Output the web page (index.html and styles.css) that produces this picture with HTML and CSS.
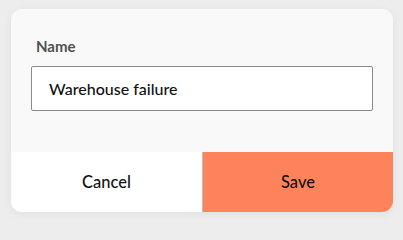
FILE: index.html
```html
<!DOCTYPE html>
<html>
<head>
<meta charset="utf-8">
<link rel="stylesheet" href="styles.css">
</head>
<body>
<div class="card">
  <div class="card-body">
    <label class="label" for="name">Name</label>
    <div class="input">Warehouse failure</div>
  </div>
  <div class="actions">
    <div class="btn btn-cancel">Cancel</div>
    <div class="btn btn-save">Save</div>
  </div>
</div>
</body>
</html>
```

FILE: styles.css
```css
html, body {
  margin: 0;
  padding: 0;
}
body {
  background: #ededed;
  font-family: "Lato", "Noto Sans", sans-serif;
  width: 403px;
  height: 224px;
  overflow: hidden;
}
.card {
  margin: 9px 0 0 11px;
  width: 382px;
  height: 203px;
  background: #f9f9f9;
  border-radius: 11px;
  overflow: hidden;
  box-shadow: 0 2px 10px rgba(0, 0, 0, 0.06);
  display: flex;
  flex-direction: column;
}
.card-body {
  flex: 1;
  padding: 28px 20px 0;
  display: flex;
  flex-direction: column;
}
.label {
  display: block;
  padding-left: 5px;
  font-size: 15px;
  line-height: 18px;
  font-weight: 700;
  color: #505050;
  margin-bottom: 11px;
}
.input {
  height: 43px;
  border: 1px solid #8a8a8a;
  border-radius: 2px;
  background: #fff;
  padding-left: 17px;
  font-size: 16px;
  line-height: 43px;
  color: #111;
  font-weight: 500;
}
.actions {
  height: 60px;
  display: grid;
  grid-template-columns: 191px 1fr;
}
.btn {
  display: flex;
  align-items: center;
  justify-content: center;
  font-size: 16.5px;
  font-weight: 500;
  color: #111;
}
.btn-cancel {
  background: #fff;
}
.btn-save {
  background: #ff835a;
  border-left: 1px solid #bdbdbd;
}
```
